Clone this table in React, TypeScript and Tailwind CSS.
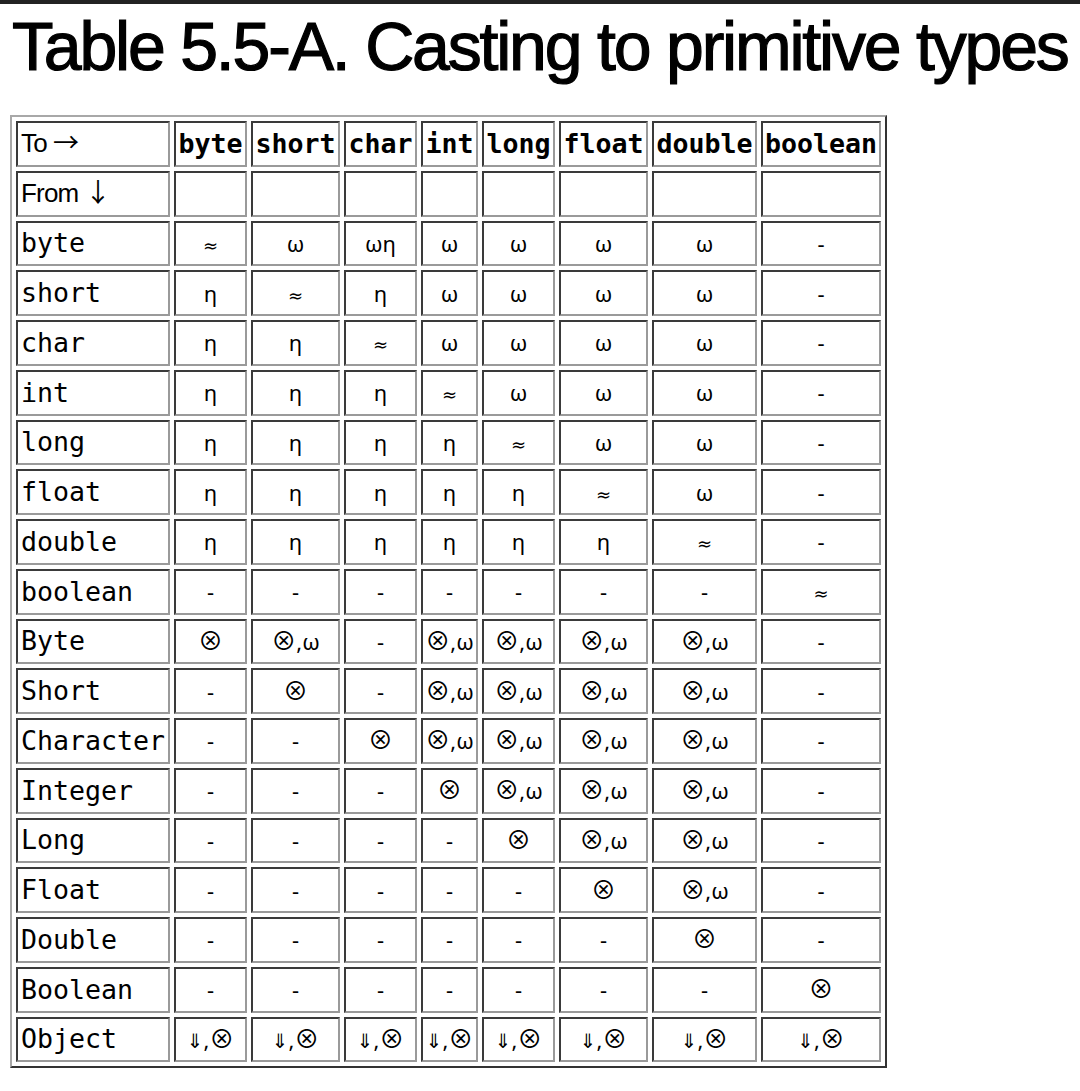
import React from "react";

const cols = ["byte", "short", "char", "int", "long", "float", "double", "boolean"];
const widths = ["w-[73px]", "w-[89px]", "w-[73px]", "w-[57px]", "w-[73px]", "w-[89px]", "w-[105px]", "w-[120px]"];

const rows: [string, string[]][] = [
  ["byte", ["≈", "ω", "ωη", "ω", "ω", "ω", "ω", "-"]],
  ["short", ["η", "≈", "η", "ω", "ω", "ω", "ω", "-"]],
  ["char", ["η", "η", "≈", "ω", "ω", "ω", "ω", "-"]],
  ["int", ["η", "η", "η", "≈", "ω", "ω", "ω", "-"]],
  ["long", ["η", "η", "η", "η", "≈", "ω", "ω", "-"]],
  ["float", ["η", "η", "η", "η", "η", "≈", "ω", "-"]],
  ["double", ["η", "η", "η", "η", "η", "η", "≈", "-"]],
  ["boolean", ["-", "-", "-", "-", "-", "-", "-", "≈"]],
  ["Byte", ["⊗", "⊗,ω", "-", "⊗,ω", "⊗,ω", "⊗,ω", "⊗,ω", "-"]],
  ["Short", ["-", "⊗", "-", "⊗,ω", "⊗,ω", "⊗,ω", "⊗,ω", "-"]],
  ["Character", ["-", "-", "⊗", "⊗,ω", "⊗,ω", "⊗,ω", "⊗,ω", "-"]],
  ["Integer", ["-", "-", "-", "⊗", "⊗,ω", "⊗,ω", "⊗,ω", "-"]],
  ["Long", ["-", "-", "-", "-", "⊗", "⊗,ω", "⊗,ω", "-"]],
  ["Float", ["-", "-", "-", "-", "-", "⊗", "⊗,ω", "-"]],
  ["Double", ["-", "-", "-", "-", "-", "-", "⊗", "-"]],
  ["Boolean", ["-", "-", "-", "-", "-", "-", "-", "⊗"]],
  ["Object", ["⇓,⊗", "⇓,⊗", "⇓,⊗", "⇓,⊗", "⇓,⊗", "⇓,⊗", "⇓,⊗", "⇓,⊗"]],
];

const cell =
  "border-2 border-t-[#3a3a3a] border-l-[#3a3a3a] border-r-[#9a9a9a] border-b-[#9a9a9a] h-[45.75px] p-0";

function Value({ v }: { v: string }) {
  return (
    <>
      {Array.from(v).map((ch, i) => {
        if (ch === "⊗")
          return (
            <span key={i} className="text-[25px] leading-none [font-family:'Noto_Sans_CJK_JP',sans-serif]">
              ⊗
            </span>
          );
        if (ch === "≈")
          return (
            <span key={i} className="text-[18px] leading-none [font-family:'DejaVu_Sans',sans-serif]">
              ≈
            </span>
          );
        if (ch === "⇓")
          return (
            <span key={i} className="text-[20px] leading-none [font-family:'Noto_Sans_CJK_JP','DejaVu_Sans',sans-serif]">
              ⇓
            </span>
          );
        return <span key={i}>{ch}</span>;
      })}
    </>
  );
}

export default function App() {
  return (
    <div className="w-[1080px] h-[1091px] bg-white text-black overflow-hidden">
      <div className="h-[4px] bg-[#222222]" />
      <h1 className="mt-[8px] ml-[12px] text-[68px] leading-[68px] tracking-[-2.2px] font-normal whitespace-nowrap [-webkit-text-stroke:1.2px_black] [font-family:'Liberation_Sans',Arial,sans-serif]">
        Table 5.5-A. Casting to primitive types
      </h1>
      <table className="ml-[10px] mt-[35px] border-separate border-spacing-[4px] border-2 border-t-[#a8a8a8] border-l-[#a8a8a8] border-r-[#333333] border-b-[#333333]">
        <tbody>
          <tr>
            <td className={`${cell} w-[154px] pl-[3px] text-left text-[26px] tracking-[-0.8px] [font-family:'Liberation_Sans',Arial,sans-serif]`}>
              To<span className="ml-[6px] text-[26px] leading-none tracking-normal [font-family:'Noto_Sans_CJK_JP',sans-serif]">→</span>
            </td>
            {cols.map((c, i) => (
              <td
                key={c}
                className={`${cell} ${widths[i]} text-center font-bold text-[26.6px] [font-family:'DejaVu_Sans_Mono',monospace]`}
              >
                {c}
              </td>
            ))}
          </tr>
          <tr>
            <td className={`${cell} pl-[3px] text-left text-[26px] tracking-[-0.8px] [font-family:'Liberation_Sans',Arial,sans-serif]`}>
              From <span className="text-[26px] leading-none tracking-normal [font-family:'Noto_Sans_CJK_JP',sans-serif]">↓</span>
            </td>
            {cols.map((c) => (
              <td key={c} className={cell} />
            ))}
          </tr>
          {rows.map(([label, vals]) => (
            <tr key={label}>
              <td className={`${cell} pl-[3px] text-left text-[26.6px] [font-family:'DejaVu_Sans_Mono',monospace]`}>
                {label}
              </td>
              {vals.map((v, i) => (
                <td
                  key={i}
                  className={`${cell} text-center text-[22px] [font-family:'Noto_Sans','DejaVu_Sans',sans-serif]`}
                >
                  <Value v={v} />
                </td>
              ))}
            </tr>
          ))}
        </tbody>
      </table>
    </div>
  );
}
